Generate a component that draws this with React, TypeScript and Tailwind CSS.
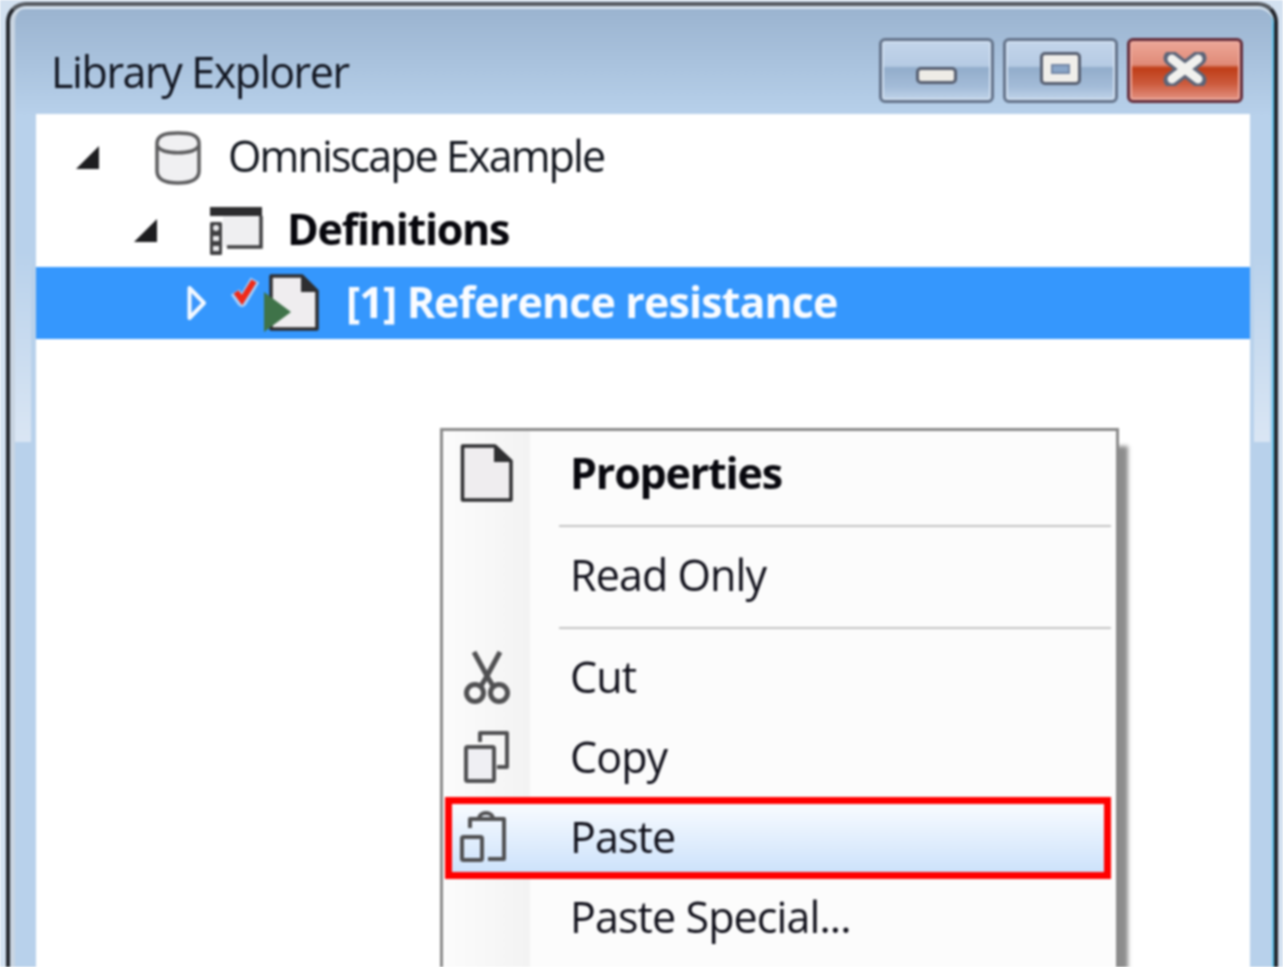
import React from "react";

const Arrow = () => (
  <svg width="25" height="26" viewBox="0 0 25 26" className="shrink-0">
    <path d="M24 1 V24 H1 Z" fill="#1d1d1f" />
  </svg>
);

const HollowArrow = () => (
  <svg width="20" height="36" viewBox="0 0 20 36" className="shrink-0">
    <path d="M2.5 3 L17 18 L2.5 33 Z" fill="#3a96fc" stroke="#f4f9ff" strokeWidth="4" strokeLinejoin="round" />
  </svg>
);

const DbIcon = () => (
  <svg width="46" height="54" viewBox="0 0 46 54" className="shrink-0">
    <path d="M2 13 C2 4 10 2 23 2 C36 2 44 4 44 13 V40 C44 49 36 52 23 52 C10 52 2 49 2 40 Z" fill="#f0f0f2" stroke="#5c5c5e" strokeWidth="3.5" />
    <path d="M2 15 C8 24 38 24 44 15" fill="none" stroke="#5c5c5e" strokeWidth="3.5" />
  </svg>
);

const DefsIcon = () => (
  <svg width="54" height="50" viewBox="0 0 54 50" className="shrink-0">
    <rect x="14" y="10" width="37" height="31" fill="#efeff1" />
    <rect x="1" y="1" width="52" height="9" fill="#2c2c2e" />
    <path d="M52 10 V41 H18" fill="none" stroke="#404042" strokeWidth="3.5" />
    <rect x="1" y="16" width="12" height="33" rx="1.5" fill="#404042" />
    <circle cx="7" cy="22" r="3" fill="#e8e8ea" />
    <rect x="4" y="30" width="6" height="5" fill="#e8e8ea" />
    <rect x="4" y="40" width="6" height="5" fill="#e8e8ea" />
  </svg>
);

const Check = () => (
  <svg width="28" height="32" viewBox="0 0 28 32" className="shrink-0">
    <path d="M4 16 L11 26 L24 4" fill="none" stroke="#ffffff" strokeWidth="10" strokeOpacity="0.55" strokeLinejoin="round" />
    <path d="M5 16 L11 24 L23 5" fill="none" stroke="#f02a17" strokeWidth="6" />
  </svg>
);

const DocPlay = () => (
  <svg width="56" height="58" viewBox="0 0 56 58" className="shrink-0">
    <path d="M7 2 H38 L53 17 V55 H7 Z" fill="#efedef" stroke="#2e2e30" strokeWidth="3.5" strokeLinejoin="round" />
    <path d="M37 2 L53 18 H37 Z" fill="#2e2e30" />
    <path d="M0 18 L27 38 L0 58 Z" fill="#3f7349" />
  </svg>
);

const PageIcon = () => (
  <svg width="54" height="60" viewBox="0 0 54 60">
    <path d="M2.5 3 H35 L51 18 V57 H2.5 Z" fill="#efedef" stroke="#2e2e30" strokeWidth="3.5" strokeLinejoin="round" />
    <path d="M34 2 L52 19 H34 Z" fill="#2e2e30" />
  </svg>
);

const ScissorsIcon = () => (
  <svg width="48" height="54" viewBox="0 0 48 54" fill="none" stroke="#505052" strokeWidth="5">
    <path d="M11 2 L24 26 L37 2 M18 36 L24 26 L30 36" />
    <circle cx="12" cy="43" r="8.5" />
    <circle cx="36" cy="43" r="8.5" />
  </svg>
);

const CopyIcon = () => (
  <svg width="46" height="52" viewBox="0 0 46 52" fill="none" stroke="#505052" strokeWidth="4">
    <path d="M16 11 V2 H43 V36 H33" strokeLinejoin="round" />
    <rect x="2" y="16" width="28" height="34" rx="1.5" fill="#efeff3" />
  </svg>
);

const PasteIcon = () => (
  <svg width="48" height="56" viewBox="0 0 48 56" fill="none" stroke="#505052" strokeWidth="4">
    <path d="M10 20 V11 H44 V51 H28" strokeLinejoin="round" />
    <path d="M19 11 C19 3 33 3 33 11" />
    <rect x="2" y="29" width="20" height="23" rx="1.5" />
  </svg>
);

const MenuRow = ({ label, icon, bold, active }: { label: string; icon?: React.ReactNode; bold?: boolean; active?: boolean }) => (
  <div
    className={
      "flex h-[80px] items-center " +
      (active ? "bg-gradient-to-b from-[#fdfeff] to-[#cbe1fb] border-b-2 border-[#a8c7ee]" : "")
    }
  >
    <div className={"flex w-[85px] shrink-0 items-center justify-center " + (active ? "pr-[8px]" : "pr-[2px]")}>{icon}</div>
    <span
      className={
        "ml-[40px] text-[43px] leading-none " +
        (active ? "" : "mb-[2px] ") +
        (bold ? "font-bold tracking-[-1.2px] text-[#08080e]" : "tracking-[-0.9px] text-[#10101a]")
      }
    >
      {label}
    </span>
  </div>
);

const Sep = () => (
  <div className="flex h-[22px] items-center pl-[114px] pt-[4px]">
    <div className="h-[2px] w-full bg-[#c4c4c4]" />
  </div>
);

export default function App() {
  return (
    <div className="relative h-[967px] w-[1283px] overflow-hidden bg-[#d3e1f0] pl-[6px] pr-[5px] pt-[2px] font-['Open_Sans',sans-serif] blur-[0.8px]">
      <div className="relative flex h-[1100px] flex-col rounded-t-[20px] border-x-[4px] border-t-[4px] border-x-[#23262c] border-t-[#55595f] bg-gradient-to-b from-[#9ab3cf] from-[0px] to-[#b8d1eb] to-[110px] shadow-[inset_0_3px_0_#d6e2ee,inset_5px_0_0_#c9d5e2,inset_-2px_0_0_#5cc4ec]">
        {/* glass streaks on the frame */}
        <div className="absolute left-[5px] top-[244px] h-[192px] w-[16px] bg-gradient-to-b from-[#b8d1eb] to-[#dae6f4]" />
        <div className="absolute right-[4px] top-[244px] h-[192px] w-[16px] bg-gradient-to-b from-[#b8d1eb] to-[#dae6f4]" />

        {/* title bar */}
        <div className="flex h-[108px] shrink-0 items-start justify-between pl-[41px] pr-[31px]">
          <span className="mt-[40px] text-[43px] leading-[52px] tracking-[-1.4px] text-[#10141f]">Library Explorer</span>
          <div className="mt-[32px] flex gap-[9px]">
            <div className="flex h-[65px] w-[115px] items-center justify-center rounded-[6px] border-[3px] border-[#64738a] bg-[linear-gradient(#c3d5ea_0%,#b6cbe4_42%,#92adcb_46%,#a4bcd8_78%,#c0d4ea_100%)] shadow-[inset_0_0_0_2px_#cfdeef]">
              <div className="mt-[10px] h-[17px] w-[41px] rounded-[5px] border-[3px] border-[#565e70] bg-[#eeece6]" />
            </div>
            <div className="flex h-[65px] w-[115px] items-center justify-center rounded-[6px] border-[3px] border-[#64738a] bg-[linear-gradient(#c3d5ea_0%,#b6cbe4_42%,#92adcb_46%,#a4bcd8_78%,#c0d4ea_100%)] shadow-[inset_0_0_0_2px_#cfdeef]">
              <div className="mb-[4px] flex h-[33px] w-[41px] items-center justify-center rounded-[5px] border-[3px] border-[#565e70] bg-[#f0eeea]">
                <div className="h-[10px] w-[19px] border-[2px] border-[#7488a6] bg-[#8aa6c8]" />
              </div>
            </div>
            <div className="flex h-[65px] w-[116px] items-center justify-center rounded-[6px] border-[3px] border-[#642c3a] bg-[linear-gradient(#eda798_0%,#e08b78_40%,#bf3d17_46%,#cc5a3c_72%,#e49383_100%)] shadow-[inset_0_0_0_2px_#eca99c]">
              <svg width="44" height="34" viewBox="0 0 44 34" className="mb-[4px]">
                <path d="M8 6 L36 28 M36 6 L8 28" stroke="#5b6478" strokeWidth="15" strokeLinecap="round" />
                <path d="M9 7 L35 27 M35 7 L9 27" stroke="#f1f1ee" strokeWidth="9" strokeLinecap="round" />
              </svg>
            </div>
          </div>
        </div>

        {/* tree */}
        <div className="relative ml-[26px] mr-[24px] flex-1 bg-white pt-[7px]">
          <div className="flex h-[73px] items-center pl-[39px]">
            <Arrow />
            <div className="ml-[55px]"><DbIcon /></div>
            <span className="mb-[4px] ml-[27px] text-[43px] leading-none tracking-[-1.9px] text-[#10141c]">Omniscape Example</span>
          </div>
          <div className="flex h-[73px] items-center pl-[97px]">
            <Arrow />
            <div className="ml-[51px]"><DefsIcon /></div>
            <span className="mb-[4px] ml-[24px] text-[43px] font-bold leading-none tracking-[-1.3px] text-[#06060c]">Definitions</span>
          </div>
          <div className="flex h-[72px] items-center bg-[#3597fd] pl-[151px]">
            <HollowArrow />
            <div className="mb-[22px] ml-[24px]"><Check /></div>
            <div className="ml-[5px]"><DocPlay /></div>
            <span className="mb-[4px] ml-[26px] text-[43px] font-bold leading-none tracking-[-0.9px] text-[#fafcff]">[1] Reference resistance</span>
          </div>
        </div>

        {/* context menu */}
        <div className="absolute left-[430px] top-[422px] h-[700px] w-[679px] border-[3px] border-[#8a8a8a] bg-[#fcfcfc] pl-[2px] pr-[5px] pt-[2px] shadow-[9px_18px_4px_rgba(0,0,0,0.45)]">
          <div className="absolute bottom-0 left-0 top-0 w-[87px] bg-gradient-to-r from-[#fcfcfc] to-[#f3f3f3]" />
          <div className="relative">
            <MenuRow label="Properties" bold icon={<PageIcon />} />
            <Sep />
            <MenuRow label="Read Only" />
            <Sep />
            <MenuRow label="Cut" icon={<ScissorsIcon />} />
            <MenuRow label="Copy" icon={<CopyIcon />} />
            <MenuRow label="Paste" active icon={<PasteIcon />} />
            <MenuRow label="Paste Special..." />
            <div className="absolute left-0 right-0 top-[364px] h-[82px] border-[7px] border-[#ff0000]" />
          </div>
        </div>
      </div>
    </div>
  );
}
